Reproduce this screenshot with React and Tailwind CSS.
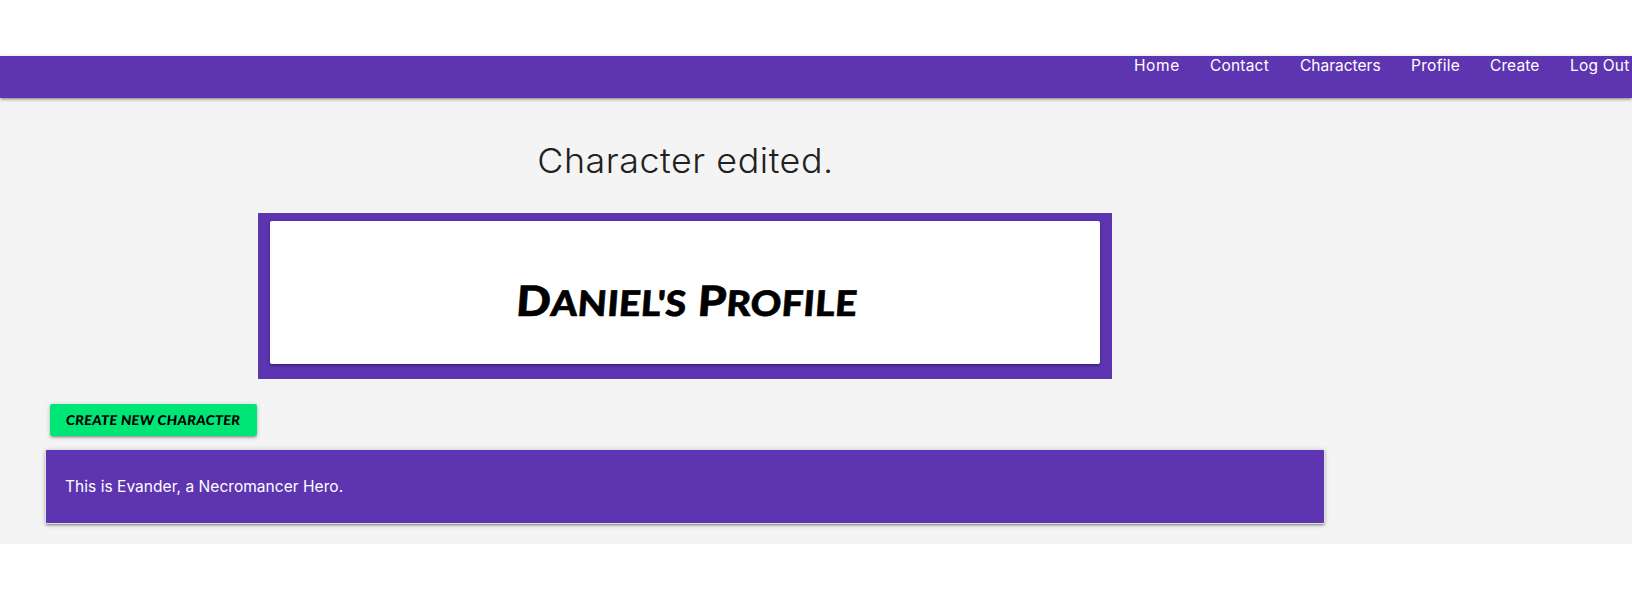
const links = [
  { label: 'Home', box: 'w-[76px]', text: 'tracking-[0.6px]' },
  { label: 'Contact', box: 'w-[90px]', text: 'tracking-[0.2px]' },
  { label: 'Characters', box: 'w-[111px]', text: 'tracking-[0px]' },
  { label: 'Profile', box: 'w-[79px]', text: 'tracking-[0.3px]' },
  { label: 'Create', box: 'w-[80px]', text: 'tracking-[0.1px]' },
  { label: 'Log Out', box: 'w-[62px]', text: 'tracking-[0.2px]' },
];

function NavBar() {
  return (
    <nav className="relative flex h-[42px] justify-end bg-[#5e35b1] text-[15.5px] leading-5 text-white shadow-[0_2px_2px_0_rgba(0,0,0,0.14),0_3px_1px_-2px_rgba(0,0,0,0.12),0_1px_5px_0_rgba(0,0,0,0.2)]">
      <ul className="flex whitespace-nowrap">
        {links.map((l) => (
          <li key={l.label} className={l.box}>
            <a className={l.text}>{l.label}</a>
          </li>
        ))}
      </ul>
    </nav>
  );
}

export default function App() {
  return (
    <div className="h-[599px] w-[1632px] overflow-hidden bg-white pt-14 font-['Inter','Open_Sans',sans-serif]">
      <NavBar />
      <main className="h-[446px] bg-[#f4f4f4] pl-[46px]">
        <div className="flex w-[1278px] flex-col">
          <h4 className="flex h-[115px] items-start justify-center pt-[43px] text-[34px] leading-10 font-light text-[#212121]">
            <span className="scale-x-[1.055] tracking-[0.5px]">Character edited.</span>
          </h4>
          <section className="ml-[212px] h-[166px] w-[854px] bg-[#5e35b1] px-3 pt-2">
            <div className="flex h-[143px] justify-center rounded-[2px] bg-white pt-[54px] shadow-[0_2px_2px_0_rgba(0,0,0,0.14),0_3px_1px_-2px_rgba(0,0,0,0.12),0_1px_5px_0_rgba(0,0,0,0.2)]">
              <h1 className="scale-x-[1.083] -skew-x-4 text-[42px] leading-[50px] font-black tracking-[0.2px] whitespace-nowrap text-black uppercase [-webkit-text-stroke:0.6px_black] font-['Lato',sans-serif]">
                D<span className="text-[35px]">aniel's</span> P<span className="text-[35px]">rofile</span>
              </h1>
            </div>
          </section>
          <button className="mt-[25px] ml-1 h-8 w-[207px] rounded-[2px] bg-[#00e676] px-4 text-left text-[13.5px] leading-8 font-black whitespace-nowrap text-black uppercase shadow-[0_2px_2px_0_rgba(0,0,0,0.14),0_3px_1px_-2px_rgba(0,0,0,0.12),0_1px_5px_0_rgba(0,0,0,0.2)] font-['Lato',sans-serif]">
            <span className="inline-block -skew-x-6 tracking-[0.27px]">Create new character</span>
          </button>
          <ul className="mt-[13px] -ml-px h-[75px] w-[1280px] rounded-[2px] border border-[#e0e0e0] bg-[#5e35b1] px-5 pt-[25px] text-[15.5px] leading-6 text-white shadow-[0_2px_2px_0_rgba(0,0,0,0.14),0_3px_1px_-2px_rgba(0,0,0,0.12),0_1px_5px_0_rgba(0,0,0,0.2)]">
            <li className="-ml-px tracking-[0.04px]">This is Evander, a Necromancer Hero.</li>
          </ul>
        </div>
      </main>
    </div>
  );
}
